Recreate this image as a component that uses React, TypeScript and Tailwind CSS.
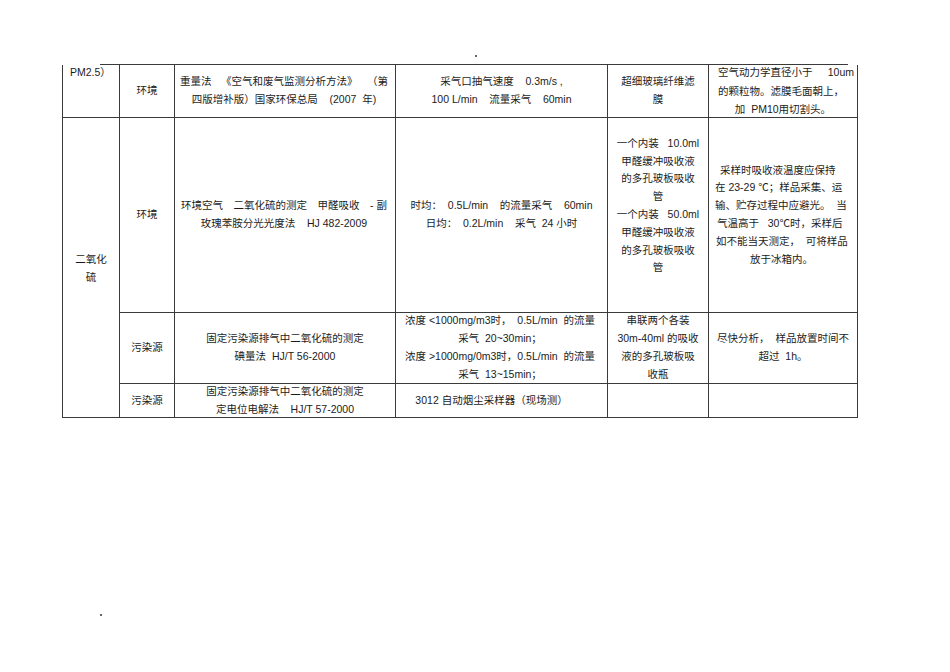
import React from "react";
import clsx from "clsx";

type CellProps = { children?: React.ReactNode; className?: string };

const Cell = ({ children, className }: CellProps) => (
  <div
    className={clsx(
      "flex flex-col justify-center text-center border-r border-b border-[#3a3a3a] whitespace-pre",
      className
    )}
  >
    {children}
  </div>
);

// a line whose pieces are pushed to both edges, like justified text
const Spread = ({ parts, className }: { parts: string[]; className?: string }) => (
  <div className={clsx("flex justify-between", className)}>
    {parts.map((p) => (
      <span key={p}>{p}</span>
    ))}
  </div>
);

const Lines = ({ lines }: { lines: string[] }) => (
  <>
    {lines.map((l, i) => (
      <div key={i}>{l}</div>
    ))}
  </>
);

export default function App() {
  return (
    <div className="w-[950px] h-[672px] bg-white text-[#1c1c1c] text-[10.5px] leading-[17.8px] font-['Liberation_Sans','Noto_Sans_CJK_SC',sans-serif]">
      <div className="h-[64px] pt-[55px] pl-[475px]">
        <div className="w-[2px] h-[2px] bg-[#666]" />
      </div>
      <div className="ml-[100px] w-[748px] h-px bg-[#3a3a3a]" />

      <div className="ml-[62px] w-[796px] grid grid-cols-[57px_55px_221px_212px_101px_149px] grid-rows-[53px_195px_71px_34px] border-l border-[#3a3a3a]">
        {/* PM2.5 row */}
        <Cell className="justify-start text-left pl-[7px] leading-[14px]">PM2.5）</Cell>
        <Cell>环境</Cell>
        <Cell className="pl-[5px] pr-[7px]">
          <Spread parts={["重量法", "《空气和废气监测分析方法》", "（第"]} />
          <div>四版增补版）国家环保总局    (2007  年)</div>
        </Cell>
        <Cell>
          <Lines lines={["采气口抽气速度    0.3m/s ,", "100 L/min    流量采气    60min"]} />
        </Cell>
        <Cell>
          <Lines lines={["超细玻璃纤维滤", "膜"]} />
        </Cell>
        <Cell className="leading-[18.5px]">
          <Spread parts={["空气动力学直径小于", "10um"]} className="pl-[9px] pr-[3px]" />
          <div className="text-left pl-[9px]">的颗粒物。滤膜毛面朝上，</div>
          <div>加  PM10用切割头。</div>
        </Cell>

        {/* 二氧化硫 */}
        <Cell className="row-span-3 leading-[18px] pt-px">
          <Lines lines={["二氧化", "硫"]} />
        </Cell>
        <Cell>环境</Cell>
        <Cell className="pl-[6px] pr-[8px]">
          <Spread parts={["环境空气", "二氧化硫的测定", "甲醛吸收", "- 副"]} />
          <div>玫瑰苯胺分光光度法    HJ 482-2009</div>
        </Cell>
        <Cell>
          <Lines lines={["时均：  0.5L/min    的流量采气    60min", "日均：  0.2L/min    采气  24 小时"]} />
        </Cell>
        <Cell className="pb-[18px]">
          <Lines
            lines={[
              "一个内装   10.0ml",
              "甲醛缓冲吸收液",
              "的多孔玻板吸收",
              "管",
              "一个内装   50.0ml",
              "甲醛缓冲吸收液",
              "的多孔玻板吸收",
              "管",
            ]}
          />
        </Cell>
        <Cell className="text-left">
          <div className="pl-[11px]">采样时吸收液温度应保持</div>
          <div className="pl-[6px]">在 23-29 ℃；样品采集、运</div>
          <div className="pl-[6px]">输、贮存过程中应避光。  当</div>
          <div className="pl-[8px]">气温高于   30℃时，采样后</div>
          <div className="pl-[7px]">如不能当天测定，  可将样品</div>
          <div className="pl-[41px]">放于冰箱内。</div>
        </Cell>

        <Cell>污染源</Cell>
        <Cell>
          <Lines lines={["固定污染源排气中二氧化硫的测定", "碘量法  HJ/T 56-2000"]} />
        </Cell>
        <Cell className="pl-[9px] pr-[12px]">
          <Spread parts={["浓度 <1000mg/m3时，", "0.5L/min", "的流量"]} />
          <div>采气  20~30min；</div>
          <Spread parts={["浓度 >1000mg/0m3时，0.5L/min", "的流量"]} />
          <div>采气  13~15min；</div>
        </Cell>
        <Cell>
          <Lines lines={["串联两个各装", "30m-40ml 的吸收", "液的多孔玻板吸", "收瓶"]} />
        </Cell>
        <Cell>
          <Lines lines={["尽快分析，  样品放置时间不", "超过  1h。"]} />
        </Cell>

        <Cell>污染源</Cell>
        <Cell>
          <Lines lines={["固定污染源排气中二氧化硫的测定", "定电位电解法    HJ/T 57-2000"]} />
        </Cell>
        <Cell className="pr-[20px]">3012 自动烟尘采样器（现场测）</Cell>
        <Cell />
        <Cell />
      </div>

      <div className="pt-[196px] pl-[100px]">
        <div className="w-[2px] h-[2px] bg-[#666]" />
      </div>
    </div>
  );
}
